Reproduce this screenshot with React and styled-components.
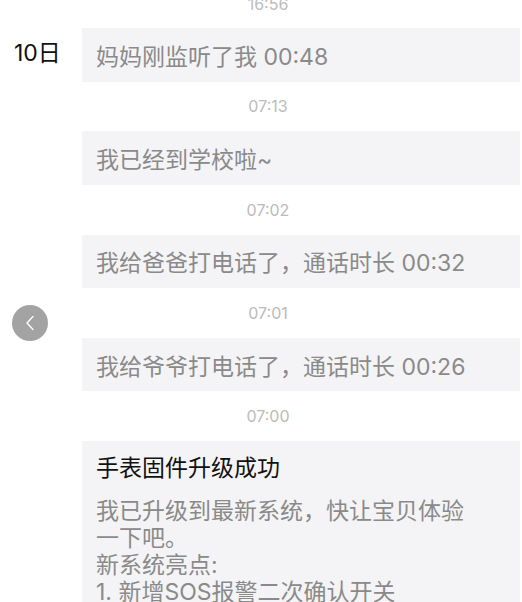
import React from "react";
import styled, { createGlobalStyle } from "styled-components";

const GlobalStyle = createGlobalStyle`
  html, body {
    margin: 0;
    padding: 0;
    background: #fff;
    overflow: hidden;
  }
  body {
    font-family: "Inter", "Noto Sans CJK SC", sans-serif;
  }
`;

const Page = styled.div`
  position: relative;
  width: 522px;
  height: 602px;
  overflow: hidden;
`;

const List = styled.div`
  display: flex;
  flex-direction: column;
  margin-top: -20px;
  padding-right: 2px;
`;

const TimeRow = styled.div`
  height: 49.75px;
  display: flex;
  align-items: center;
  justify-content: center;
  padding-left: 16px;
  font-size: 16px;
  color: #bbbbbb;
`;

const FirstTime = styled(TimeRow)`
  height: 48px;
`;

const Row = styled.div`
  display: grid;
  grid-template-columns: 82px 1fr;
`;

const DateCell = styled.div`
  display: flex;
  align-items: center;
  padding: 0 0 7px 14px;
  font-size: 23px;
  color: #111;
`;

const Bubble = styled.div`
  background: #f4f4f6;
  height: ${(p) => (p.$card ? "auto" : "53.5px")};
  display: flex;
  flex-direction: column;
  justify-content: center;
  padding: ${(p) => (p.$card ? "14px 46px 20px 14px" : "0 14px")};
  font-size: 23px;
  color: #8a8a8a;
`;

const Title = styled.div`
  color: #111;
  line-height: 27px;
  margin-bottom: 16px;
`;

const Body = styled.div`
  line-height: 27px;
`;

const BackButton = styled.div`
  position: absolute;
  left: 12px;
  top: 305px;
  width: 36px;
  height: 36px;
  border-radius: 50%;
  background: #a3a3a3;
  display: flex;
  align-items: center;
  justify-content: center;
`;

const messages = [
  { time: "16:56", text: "妈妈刚监听了我 00:48", date: "10日" },
  { time: "07:13", text: "我已经到学校啦~" },
  { time: "07:02", text: "我给爸爸打电话了，通话时长 00:32" },
  { time: "07:01", text: "我给爷爷打电话了，通话时长 00:26" },
];

export default function App() {
  return (
    <>
      <GlobalStyle />
      <Page>
        <List>
          {messages.map((m, i) => {
            const Time = i === 0 ? FirstTime : TimeRow;
            return (
              <React.Fragment key={m.time}>
                <Time>{m.time}</Time>
                <Row>
                  <DateCell>{m.date}</DateCell>
                  <Bubble>{m.text}</Bubble>
                </Row>
              </React.Fragment>
            );
          })}
          <TimeRow>07:00</TimeRow>
          <Row>
            <DateCell />
            <Bubble $card>
              <Title>手表固件升级成功</Title>
              <Body>
                我已升级到最新系统，快让宝贝体验一下吧。
                <br />
                新系统亮点:
                <br />
                1. 新增SOS报警二次确认开关
                <br />
                2. 优化定位功能，位置更精准
                <br />
                3. 修复已知问题
              </Body>
            </Bubble>
          </Row>
        </List>
        <BackButton>
          <svg width="10" height="16" viewBox="0 0 10 16" fill="none">
            <path d="M8 1.5 L2 8 L8 14.5" stroke="#fff" strokeWidth="1.3" strokeLinecap="round" strokeLinejoin="round" />
          </svg>
        </BackButton>
      </Page>
    </>
  );
}
